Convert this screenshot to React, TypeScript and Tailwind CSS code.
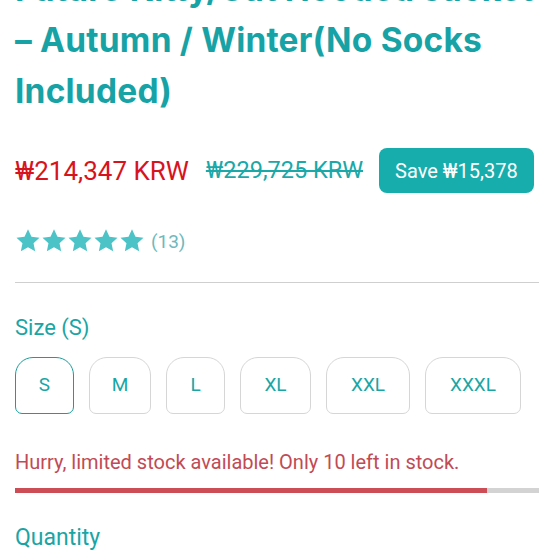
import React from "react";

const sizes: { label: string; w: string }[] = [
  { label: "S", w: "w-[59px]" },
  { label: "M", w: "w-[62px]" },
  { label: "L", w: "w-[59px]" },
  { label: "XL", w: "w-[71px]" },
  { label: "XXL", w: "w-[84px]" },
  { label: "XXXL", w: "w-[96px]" },
];

function Star() {
  return (
    <svg width="26" height="26" viewBox="0 0 24 24" className="shrink-0">
      <path
        d="M12 1.2l3.2 6.8 7.4.9-5.5 5.1 1.5 7.4L12 17.7l-6.6 3.7 1.5-7.4-5.5-5.1 7.4-.9z"
        fill="#4cc3c6"
      />
    </svg>
  );
}

export default function App() {
  return (
    <div className="w-[554px] h-[554px] overflow-hidden bg-white px-[15px]">
      <h1
        className="mt-[-36px] text-[#17a3a6] font-bold text-[33.5px] leading-[51px] tracking-[0.2px]"
        style={{ fontFamily: "Inter, 'Open Sans', sans-serif" }}
      >
        Future Kitty/Cat Hooded Jacket
        <br />– Autumn / Winter(No Socks
        <br />
        Included)
      </h1>

      <div
        className="mt-[31px] flex items-center"
        style={{ fontFamily: "Roboto, 'Liberation Sans', sans-serif" }}
      >
        <span className="text-[#d7141d] text-[26px] leading-none">₩214,347 KRW</span>
        <span className="ml-[17px] text-[#1aa8a8] text-[23.5px] leading-none line-through decoration-[1.5px]">
          ₩229,725 KRW
        </span>
        <span className="ml-[16px] h-[45px] px-[16px] flex items-center rounded-[8px] bg-[#17adad] text-white text-[20px]">
          Save ₩15,378
        </span>
      </div>

      <div
        className="mt-[35px] flex items-center"
        style={{ fontFamily: "Roboto, 'Liberation Sans', sans-serif" }}
      >
        <div className="flex">
          <Star />
          <Star />
          <Star />
          <Star />
          <Star />
        </div>
        <span className="ml-[6px] text-[#6fb9bb] text-[19px] leading-none">(13)</span>
      </div>

      <div className="mt-[28px] h-px bg-[#cfcfcf]" />

      <div style={{ fontFamily: "Roboto, 'Liberation Sans', sans-serif" }}>
        <div className="mt-[34px] text-[#1aa5a5] text-[22px] leading-none">Size (S)</div>

        <div className="mt-[18px] flex gap-[15px]">
          {sizes.map((s, i) => (
            <div
              key={s.label}
              className={
                i === 0
                  ? `${s.w} h-[57px] flex items-center justify-center border-[1.5px] border-[#1b9c9c] rounded-t-[18px] rounded-b-[7px] text-[#1aa5a5] text-[19px]`
                  : `${s.w} h-[57px] flex items-center justify-center border-[1.5px] border-[#d6d6d6] rounded-t-[18px] rounded-b-[7px] text-[#1aa5a5] text-[19px]`
              }
            >
              {s.label}
            </div>
          ))}
        </div>

        <div className="mt-[38px] text-[#c24a55] text-[20px] leading-none">
          Hurry, limited stock available! Only 10 left in stock.
        </div>

        <div className="mt-[16px] h-[5px] bg-[#d3d3d3]">
          <div className="h-full bg-[#cc4d55]" style={{ width: "90%" }} />
        </div>

        <div className="mt-[33px] text-[#1aa5a5] text-[23px] leading-none">Quantity</div>
      </div>
    </div>
  );
}
